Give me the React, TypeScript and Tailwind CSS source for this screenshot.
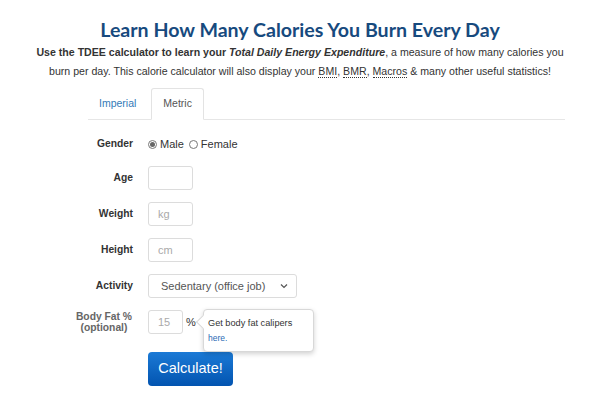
import React from "react";

function Row({ label, children }: { label: React.ReactNode; children: React.ReactNode }) {
  return (
    <div className="flex items-center">
      <div className="w-[133px] flex justify-end text-[10.3px] font-bold text-[#333]">{label}</div>
      <div className="ml-[15px] flex items-center">{children}</div>
    </div>
  );
}

export default function App() {
  return (
    <div className="w-[600px] h-[409px] bg-white overflow-hidden" style={{ fontFamily: '"Liberation Sans", Arial, sans-serif' }}>
      <h1
        className="pt-[15px] text-center text-[19.6px] font-bold text-[#174a7e] leading-[30px] whitespace-nowrap"
        style={{ fontFamily: 'Lato, sans-serif' }}
      >
        Learn How Many Calories You Burn Every Day
      </h1>
      <p className="mt-[-2px] text-center text-[10.6px] leading-[19px] text-[#333] whitespace-nowrap">
        <b>Use the </b>
        <b>TDEE</b>
        <b> calculator to learn your </b>
        <b><i>Total Daily Energy Expenditure</i></b>, a measure of how many calories you
        <br />
        burn per day. This calorie calculator will also display your{" "}
        <span className="border-b border-dotted border-[#333]">BMI</span>,{" "}
        <span className="border-b border-dotted border-[#333]">BMR</span>,{" "}
        <span className="border-b border-dotted border-[#333]">Macros</span> &amp; many other useful statistics!
      </p>

      <div className="ml-[88px] w-[477px] mt-[7px] flex border-b border-[#e6e6e6] text-[10.5px]">
        <div className="h-[31px] pl-[11px] pr-[15px] flex items-center text-[#337ab7]">Imperial</div>
        <div className="h-[32px] -mb-px px-[11px] flex items-center border border-[#e3e3e3] border-b-white bg-white rounded-t-[3px] text-[#555]">
          Metric
        </div>
      </div>

      <div className="mt-[14px] flex flex-col gap-[12px]">
        <Row label="Gender">
          <div className="h-[20px] flex items-center text-[11px] text-[#333]">
            <span className="w-[9px] h-[9px] rounded-full border border-[#777] flex items-center justify-center">
              <span className="w-[5px] h-[5px] rounded-full bg-[#666]" />
            </span>
            <span className="ml-[3px]">Male</span>
            <span className="ml-[5px] w-[9px] h-[9px] rounded-full border border-[#777]" />
            <span className="ml-[3px]">Female</span>
          </div>
        </Row>
        <Row label="Age">
          <div className="w-[45px] h-[24px] border border-[#dcdcdc] rounded-[3px]" />
        </Row>
        <Row label="Weight">
          <div className="w-[45px] h-[24px] border border-[#dcdcdc] rounded-[3px] flex items-center pl-[9px] text-[11px] text-[#aaa]">kg</div>
        </Row>
        <Row label="Height">
          <div className="w-[45px] h-[24px] border border-[#dcdcdc] rounded-[3px] flex items-center pl-[9px] text-[11px] text-[#aaa]">cm</div>
        </Row>
        <Row label="Activity">
          <div className="w-[149px] h-[24px] border border-[#dcdcdc] rounded-[3px] flex items-center justify-between pl-[12px] pr-[8px] text-[11px] text-[#555]">
            <span>Sedentary (office job)</span>
            <svg width="8" height="6" viewBox="0 0 8 6" fill="none">
              <path d="M1 1.5 L4 4.5 L7 1.5" stroke="#555" strokeWidth="1.2" />
            </svg>
          </div>
        </Row>
        <Row
          label={
            <div className="text-center leading-[11px] text-[#666] mt-[-1px] mr-[1px]">
              Body Fat %
              <br />
              (optional)
            </div>
          }
        >
          <div className="relative flex items-center">
            <div className="w-[35px] h-[24px] border border-[#dcdcdc] rounded-[3px] flex items-center pl-[9px] text-[11px] text-[#aaa]">15</div>
            <span className="ml-[3px] text-[11px] text-[#333]">%</span>
            <div className="absolute left-[55px] top-[-1px] w-[111px] h-[43px] bg-white border border-[#d8d8d8] rounded-[4px] shadow-[0_2px_5px_rgba(0,0,0,0.18)] pl-[4px] pt-[7px]">
              <div className="absolute left-[-6px] top-[7px] w-[10px] h-[10px] bg-white border-l border-b border-[#d8d8d8] rotate-45" />
              <div className="relative text-[9.2px] text-[#333] leading-[13px]">Get body fat calipers</div>
              <div className="relative mt-[2px] text-[8.5px] text-[#2a6bb5] leading-[12px]">here.</div>
            </div>
          </div>
        </Row>
        <div className="ml-[148px] mt-[6px] w-[85px] h-[34px] rounded-[4px] bg-gradient-to-b from-[#1b7ad6] to-[#0354b0] flex items-center justify-center text-white text-[14.5px]">
          Calculate!
        </div>
      </div>
    </div>
  );
}
